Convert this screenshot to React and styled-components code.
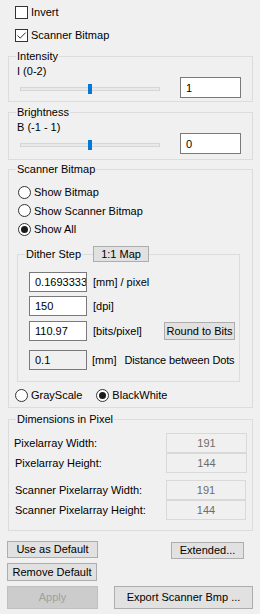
import React from 'react';
import styled, { createGlobalStyle } from 'styled-components';

const GlobalStyle = createGlobalStyle`
  html, body {
    margin: 0;
    padding: 0;
    background: #f0f0f0;
  }
  body {
    font-family: "Liberation Sans", Arial, sans-serif;
    font-size: 11px;
    color: #000;
  }
`;

const Panel = styled.div`
  width: 260px;
  height: 614px;
  box-sizing: border-box;
  background: #f0f0f0;
  display: flex;
  flex-direction: column;
  overflow: hidden;
  white-space: nowrap;
`;

const CheckRow = styled.label`
  display: flex;
  align-items: center;
  gap: 3px;
  height: 16px;
  padding-left: 15px;
  margin-top: ${(p) => p.$mt || 0}px;
`;

const Box = styled.span`
  width: 13px;
  height: 13px;
  box-sizing: border-box;
  border: 1px solid #333;
  background: #fff;
  display: flex;
  align-items: center;
  justify-content: center;
`;

const Circle = styled.span`
  width: 13px;
  height: 13px;
  box-sizing: border-box;
  border: 1px solid #333;
  border-radius: 50%;
  background: #fff;
  display: flex;
  align-items: center;
  justify-content: center;
  flex-shrink: 0;

  &::after {
    content: '';
    display: ${(p) => (p.$on ? 'block' : 'none')};
    width: 7px;
    height: 7px;
    border-radius: 50%;
    background: #1a1a1a;
  }
`;

const RadioRow = styled.label`
  display: flex;
  align-items: center;
  gap: 3px;
  height: 18px;
`;

const Group = styled.fieldset`
  margin: ${(p) => p.$mt || 0}px ${(p) => p.$mr ?? 7}px 0 ${(p) => p.$ml ?? 8}px;
  padding: 0;
  border: 1px solid #dcdcdc;
  min-width: 0;
`;

const Legend = styled.legend`
  margin-left: 7px;
  padding: 0 1px;
  line-height: 14px;
  height: 14px;
`;

const FlexLegend = styled.legend`
  margin-left: 7px;
  padding: 0 0 0 1px;
  display: flex;
  align-items: center;
  height: 16px;
`;

const LegendText = styled.span`
  width: 56px;
  line-height: 14px;
  background: #f0f0f0;
`;

const Dash = styled.span`
  width: 11px;
  height: 1px;
  background: #dcdcdc;
`;

const SliderRow = styled.div`
  display: flex;
  justify-content: space-between;
  align-items: flex-start;
  padding: 1px 11px ${(p) => p.$pb}px 8px;
`;

const SliderCol = styled.div`
  display: flex;
  flex-direction: column;
`;

const Caption = styled.div`
  line-height: 14px;
  height: 14px;
`;

const TrackWrap = styled.div`
  position: relative;
  width: 140px;
  height: 10px;
  margin: 6px 0 0 3px;
  display: flex;
  align-items: center;
`;

const Track = styled.div`
  width: 100%;
  height: 4px;
  box-sizing: border-box;
  background: #e7eaea;
  border: 1px solid #d6d6d6;
`;

const Thumb = styled.div`
  position: absolute;
  top: 0;
  width: 4px;
  height: 10px;
  margin-left: -2px;
  background: #0078d7;
`;

const NumInput = styled.input`
  width: ${(p) => p.$w || 61}px;
  height: ${(p) => p.$h || 21}px;
  margin: ${(p) => p.$mt || 0}px 0 0 0;
  box-sizing: border-box;
  border: 1px solid #7a7a7a;
  border-radius: 0;
  background: ${(p) => (p.$disabled ? '#f0f0f0' : '#fff')};
  padding: 0 0 0 5px;
  font-family: inherit;
  font-size: 11px;
  color: #000;
  outline: none;
  flex-shrink: 0;
`;

const RadioList = styled.div`
  display: flex;
  flex-direction: column;
  gap: 0.5px;
  padding-left: 9px;
  margin-top: 7px;
`;

const Btn = styled.button`
  width: ${(p) => p.$w}px;
  height: ${(p) => p.$h}px;
  margin-top: ${(p) => p.$mt || 0}px;
  margin-left: ${(p) => p.$ml || 0}px;
  padding: 0;
  box-sizing: border-box;
  border: 1px solid ${(p) => (p.disabled ? '#bfbfbf' : '#adadad')};
  background: ${(p) => (p.disabled ? '#cccccc' : '#e1e1e1')};
  color: ${(p) => (p.disabled ? '#a0a0a0' : '#000')};
  font-family: inherit;
  font-size: 11px;
  line-height: 1;
  white-space: nowrap;
  flex-shrink: 0;
`;

const PushBtn = styled(Btn)`
  margin-left: auto;
`;

const DitherBody = styled.div`
  display: flex;
  flex-direction: column;
  padding: 10px 4px 11px 11px;
`;

const FieldRow = styled.div`
  display: flex;
  align-items: center;
  height: 20px;
  margin-top: ${(p) => p.$mt || 0}px;
`;

const Unit = styled.span`
  margin-left: ${(p) => p.$ml ?? 6}px;
  letter-spacing: ${(p) => (p.$tight ? '-0.15px' : 'normal')};
`;

const ModeRow = styled.div`
  display: flex;
  align-items: center;
  gap: 14px;
  padding-left: 6px;
  margin-top: 4px;
  margin-bottom: 3px;
`;

const DimBlock = styled.div`
  display: grid;
  grid-template-columns: 1fr 81px;
  grid-auto-rows: 20px;
  align-items: center;
  margin-top: ${(p) => p.$mt || 0}px;
`;

const DimBody = styled.div`
  padding: 7px 5px 10px 5px;
`;

const DimLabel = styled.span`
  padding-left: ${(p) => p.$pl || 0}px;
`;

const DimValue = styled.div`
  height: 20px;
  box-sizing: border-box;
  border: 1px solid #d9d9d9;
  background: #f0f0f0;
  color: #6d6d6d;
  display: flex;
  align-items: center;
  justify-content: center;
  margin-right: ${(p) => p.$mr || 0}px;
`;

const ButtonRow = styled.div`
  display: flex;
  align-items: flex-start;
  justify-content: ${(p) => (p.$spread ? 'space-between' : 'flex-start')};
  padding: 0 16px 0 7px;
  margin-top: ${(p) => p.$mt || 0}px;
`;

const Check = ({ checked, children, mt }) => (
  <CheckRow $mt={mt}>
    <Box>
      {checked && (
        <svg width="11" height="11" viewBox="0 0 11 11">
          <path d="M1.5 5.5 L4.2 8.2 L9.6 2.6" fill="none" stroke="#333" strokeWidth="1" />
        </svg>
      )}
    </Box>
    {children}
  </CheckRow>
);

const Radio = ({ on, children }) => (
  <RadioRow>
    <Circle $on={on} />
    {children}
  </RadioRow>
);

const SliderGroup = ({ title, caption, value, min, max, mt, pb }) => {
  const pct = ((value - min) / (max - min)) * 100;
  return (
    <Group $mt={mt}>
      <Legend>{title}</Legend>
      <SliderRow $pb={pb}>
        <SliderCol>
          <Caption>{caption}</Caption>
          <TrackWrap>
            <Track />
            <Thumb style={{ left: `${pct}%` }} />
          </TrackWrap>
        </SliderCol>
        <NumInput $mt={13} readOnly value={value} />
      </SliderRow>
    </Group>
  );
};

const dims = [
  ['Pixelarray Width:', 191, 0, 0],
  ['Pixelarray Height:', 144, 1, 0],
];
const scannerDims = [
  ['Scanner Pixelarray Width:', 191, 1, 1],
  ['Scanner Pixelarray Height:', 144, 1, 1],
];

const DimRows = ({ rows, mt }) => (
  <DimBlock $mt={mt}>
    {rows.map(([label, v, pl, mr]) => (
      <React.Fragment key={label}>
        <DimLabel $pl={pl}>{label}</DimLabel>
        <DimValue $mr={mr}>{v}</DimValue>
      </React.Fragment>
    ))}
  </DimBlock>
);

export default function App() {
  return (
    <Panel>
      <GlobalStyle />
      <Check mt={4}>Invert</Check>
      <Check checked mt={7}>Scanner Bitmap</Check>

      <SliderGroup mt={6} pb={3} title="Intensity" caption="I (0-2)" value={1} min={0} max={2} />
      <SliderGroup mt={3} pb={5} title="Brightness" caption="B (-1 - 1)" value={0} min={-1} max={1} />

      <Group $mt={2}>
        <Legend>Scanner Bitmap</Legend>
        <RadioList>
          <Radio>Show Bitmap</Radio>
          <Radio>Show Scanner Bitmap</Radio>
          <Radio on>Show All</Radio>
        </RadioList>

        <Group $mt={8} $ml={8} $mr={12}>
          <FlexLegend>
            <LegendText>Dither Step</LegendText>
            <Dash />
            <Btn type="button" $w={56} $h={16}>1:1 Map</Btn>
          </FlexLegend>
          <DitherBody>
            <FieldRow>
              <NumInput $w={58} $h={20} readOnly value="0.169333333" />
              <Unit>[mm] / pixel</Unit>
            </FieldRow>
            <FieldRow $mt={4}>
              <NumInput $w={58} $h={20} readOnly value="150" />
              <Unit>[dpi]</Unit>
            </FieldRow>
            <FieldRow $mt={5}>
              <NumInput $w={58} $h={20} readOnly value="110.97" />
              <Unit>[bits/pixel]</Unit>
              <PushBtn type="button" $w={71} $h={18}>Round to Bits</PushBtn>
            </FieldRow>
            <FieldRow $mt={9}>
              <NumInput $w={58} $h={20} $disabled readOnly value="0.1" />
              <Unit $ml={5}>[mm]</Unit>
              <Unit $ml={8} $tight>Distance between Dots</Unit>
            </FieldRow>
          </DitherBody>
        </Group>

        <ModeRow>
          <Radio>GrayScale</Radio>
          <Radio on>BlackWhite</Radio>
        </ModeRow>
      </Group>

      <Group $mt={4}>
        <Legend>Dimensions in Pixel</Legend>
        <DimBody>
          <DimRows rows={dims} />
          <DimRows rows={scannerDims} mt={7} />
        </DimBody>
      </Group>

      <ButtonRow $spread $mt={10}>
        <Btn type="button" $w={91} $h={17}>Use as Default</Btn>
        <Btn type="button" $w={73} $h={17} $mt={1}>Extended...</Btn>
      </ButtonRow>
      <ButtonRow $mt={4}>
        <Btn type="button" $w={90} $h={18}>Remove Default</Btn>
      </ButtonRow>
      <ButtonRow $mt={5}>
        <Btn type="button" $w={91} $h={23} disabled>Apply</Btn>
        <Btn type="button" $w={139} $h={23} $ml={16}>Export Scanner Bmp ...</Btn>
      </ButtonRow>
    </Panel>
  );
}
